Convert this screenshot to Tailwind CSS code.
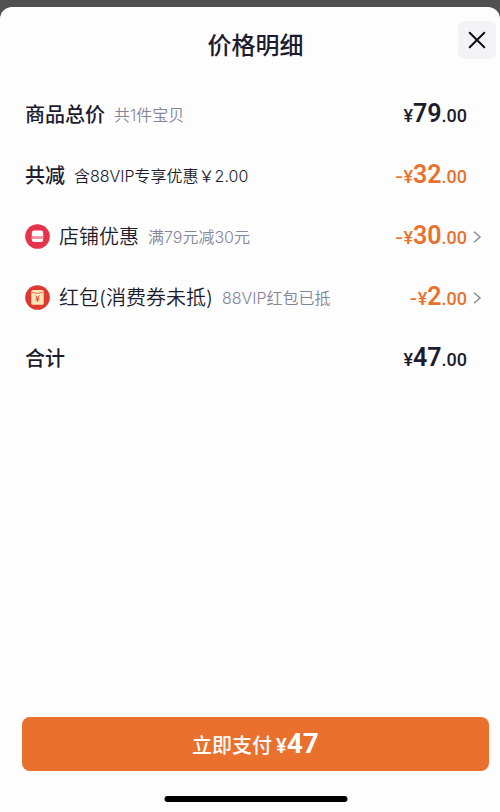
<!DOCTYPE html>
<html lang="zh-CN">
<head>
<meta charset="utf-8">
<meta name="viewport" content="width=device-width, initial-scale=1">
<title>价格明细</title>
<script src="https://cdn.jsdelivr.net/npm/@tailwindcss/browser@4"></script>
</head>
<body class="flex min-h-screen flex-col bg-[#505050] pt-[7px] font-['Inter','Noto_Sans_CJK_SC',sans-serif] text-[#1c1c2e]">
<main class="relative flex flex-1 flex-col rounded-t-xl bg-[#fdfdfd] pr-[11px] pl-[22px]">
  <header class="flex h-[77px] items-center justify-center">
    <h1 class="text-2xl leading-8 font-medium">价格明细</h1>
    <button type="button" aria-label="关闭" class="absolute top-[14px] right-1 flex size-[38px] items-center justify-center rounded-md bg-[#f3f3f7]">
      <svg class="size-[18px]" viewBox="0 0 18 18" fill="none" stroke="#111" stroke-width="2" stroke-linecap="round"><path d="M1.7 1.7 16.3 16.3M16.3 1.7 1.7 16.3"/></svg>
    </button>
  </header>

  <ul class="flex flex-col pr-[6px] pl-[3px]">
    <li class="flex h-[61px] items-center justify-between pr-4">
      <div class="flex items-center gap-[9px]"><span class="text-xl font-medium">商品总价</span><span class="text-base font-[350] text-[#85859a]">共1件宝贝</span></div>
      <div class="flex items-baseline pb-[2px] font-['Roboto','Noto_Sans_CJK_SC',sans-serif] text-lg font-medium"><span>¥</span><span class="text-[25px] leading-8 font-semibold">79</span><span>.00</span></div>
    </li>
    <li class="flex h-[61px] items-center justify-between pr-4">
      <div class="flex items-center gap-[9px]"><span class="text-xl font-medium">共减</span><span class="text-base font-[350]">含88VIP专享优惠￥2.00</span></div>
      <div class="flex items-baseline pb-[2px] font-['Roboto','Noto_Sans_CJK_SC',sans-serif] text-lg font-medium text-[#e9702d]"><span class="font-['Inter']">-</span><span>¥</span><span class="text-[25px] leading-8 font-semibold">32</span><span>.00</span></div>
    </li>
    <li>
      <button type="button" class="flex h-[61px] w-full items-center justify-between">
        <span class="flex items-center gap-[9px]">
          <svg class="size-[25px]" viewBox="0 0 25 25"><circle cx="12.5" cy="12.5" r="12.3" fill="#e5344c"/><path d="M9.200 6.500h6.600a2.400 2.400 0 0 1 2.400 2.400v3.600H6.800V8.900a2.400 2.400 0 0 1 2.400-2.400Z" fill="#fff"/><path d="M6.800 14.500h11.400v1.300a2.200 2.200 0 0 1-2.200 2.200H9a2.200 2.200 0 0 1-2.200-2.200Z" fill="#fff"/><path d="M6 13h13v.8H6Z" fill="#f4a3ae"/></svg>
          <span class="text-xl font-[350]">店铺优惠</span><span class="text-base font-[350] text-[#85859a]">满79元减30元</span>
        </span>
        <span class="flex items-center gap-[6px]">
          <span class="flex items-baseline pb-[2px] font-['Roboto','Noto_Sans_CJK_SC',sans-serif] text-lg font-medium text-[#e9702d]"><span class="font-['Inter']">-</span><span>¥</span><span class="text-[25px] leading-8 font-semibold">30</span><span>.00</span></span>
          <svg class="h-3 w-[10px]" viewBox="0 0 10 12" fill="none" stroke="#8c8c98" stroke-width="1.500"><path d="M1 .8 7 6 1 11.200"/></svg>
        </span>
      </button>
    </li>
    <li>
      <button type="button" class="flex h-[61px] w-full items-center justify-between">
        <span class="flex items-center gap-[9px]">
          <svg class="size-[25px]" viewBox="0 0 25 25"><circle cx="12.500" cy="12.500" r="12.300" fill="#dc3a2e"/><rect x="6.300" y="5" width="12.400" height="14.800" rx="1.500" fill="#fbe3b8"/><path d="M6.600 7.200q5.900 2.400 11.800 0" fill="none" stroke="#e2745a" stroke-width="1"/><path d="m10.500 10.500 2 2.400 2-2.400M12.500 12.900v3.800M10.600 13.300h3.800M10.600 15h3.800" fill="none" stroke="#dc4a3c" stroke-width="1"/></svg>
          <span class="text-xl font-[350]">红包(消费券未抵)</span><span class="text-base font-[350] text-[#85859a]">88VIP红包已抵</span>
        </span>
        <span class="flex items-center gap-[6px]">
          <span class="flex items-baseline pb-[2px] font-['Roboto','Noto_Sans_CJK_SC',sans-serif] text-lg font-medium text-[#e9702d]"><span class="font-['Inter']">-</span><span>¥</span><span class="text-[25px] leading-8 font-semibold">2</span><span>.00</span></span>
          <svg class="h-3 w-[10px]" viewBox="0 0 10 12" fill="none" stroke="#8c8c98" stroke-width="1.500"><path d="M1 .8 7 6 1 11.200"/></svg>
        </span>
      </button>
    </li>
    <li class="flex h-[61px] items-center justify-between pr-4">
      <span class="text-xl font-medium">合计</span>
      <div class="flex items-baseline pb-[2px] font-['Roboto','Noto_Sans_CJK_SC',sans-serif] text-lg font-medium"><span>¥</span><span class="text-[25px] leading-8 font-semibold">47</span><span>.00</span></div>
    </li>
  </ul>

  <footer class="mt-auto pb-[41px]">
    <button type="button" class="flex h-[54px] w-full items-center justify-center rounded-lg bg-[#e9702d] text-white">
      <span class="flex items-baseline text-xl font-medium"><span>立即支付</span><span class="ml-1 font-['Roboto'] text-xl">¥</span><span class="font-['Roboto'] text-[28px] leading-8 font-bold">47</span></span>
    </button>
  </footer>
  <div class="absolute bottom-[10px] left-1/2 ml-[6px] h-[6px] w-[183px] -translate-x-1/2 rounded-full bg-black"></div>
</main>
</body>
</html>
